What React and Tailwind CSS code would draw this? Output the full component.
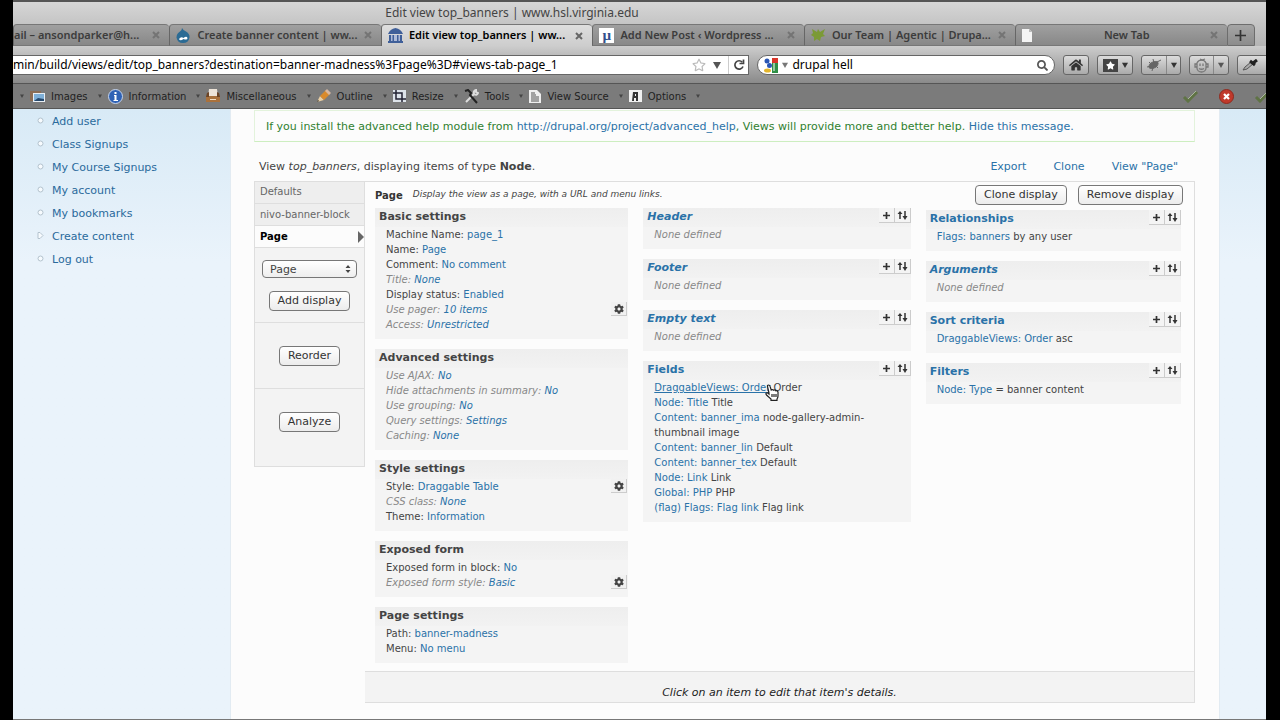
import { FaCog, FaHome, FaSearch, FaRegStar, FaStar } from "react-icons/fa";

const menuLinks = ["Add user", "Class Signups", "My Course Signups", "My account", "My bookmarks", "Create content", "Log out"];

const basicRows = [
    { label: "Machine Name:", link: "page_1" },
    { label: "Name:", link: "Page" },
    { label: "Comment:", link: "No comment" },
    { label: "Title:", link: "None", dim: true },
    { label: "Display status:", link: "Enabled" },
    { label: "Use pager:", link: "10 items", dim: true, gear: true },
    { label: "Access:", link: "Unrestricted", dim: true },
];

const advancedRows = [
    { label: "Use AJAX:", link: "No", dim: true },
    { label: "Hide attachments in summary:", link: "No", dim: true },
    { label: "Use grouping:", link: "No", dim: true },
    { label: "Query settings:", link: "Settings", dim: true },
    { label: "Caching:", link: "None", dim: true },
];

const styleRows = [
    { label: "Style:", link: "Draggable Table", gear: true },
    { label: "CSS class:", link: "None", dim: true },
    { label: "Theme:", link: "Information" },
];

const exposedRows = [
    { label: "Exposed form in block:", link: "No" },
    { label: "Exposed form style:", link: "Basic", dim: true, gear: true },
];

const pageRows = [
    { label: "Path:", link: "banner-madness" },
    { label: "Menu:", link: "No menu" },
];

const fieldRows = [
    { link: "DraggableViews: Order", text: "Order", hover: true },
    { link: "Node: Title", text: "Title" },
    { link: "Content: banner_ima", text: "node-gallery-admin-thumbnail image" },
    { link: "Content: banner_lin", text: "Default" },
    { link: "Content: banner_tex", text: "Default" },
    { link: "Node: Link", text: "Link" },
    { link: "Global: PHP", text: "PHP" },
    { link: "(flag) Flags: Flag link", text: "Flag link" },
];

export default function App() {
    return (
        <div className="min-h-screen bg-black pl-[13px] pr-[14px] flex flex-col font-['DejaVu_Sans',sans-serif]">
            <BrowserChrome />

            <div className="flex-1 flex bg-[#eaf3fb] border-b border-[#777] overflow-hidden">
                <nav className="w-[218px] shrink-0 pt-[2px] pl-[24px] bg-linear-to-b from-[#d8eaf6] to-[#eaf3fb] to-25% border-r border-[#e2ebf2]">
                    <ul>
                        {menuLinks.map((item) => (
                            <li key={item} className="h-[23px] flex items-center gap-2">
                                <MenuBullet open={item === "Create content"} />
                                <a href="#" className="text-[11px] text-[#2a6a9c]">{item}</a>
                            </li>
                        ))}
                    </ul>
                </nav>

                <main className="flex-1 min-w-0 bg-[#fcfcfc] pl-[23px] pr-6 pb-4">
                    <div className="mt-px h-8 border border-[#e3f3dc] border-b-[#cdeec0] pl-[11px] pt-[2px] flex items-center text-[11px] text-[#2f7f2f] whitespace-pre">
                        If you install the advanced help module from <a href="#" className="text-[#2a72a8]">http://drupal.org/project/advanced_help</a>, Views will provide more and better help. <a href="#" className="text-[#2a72a8]">Hide this message.</a>
                    </div>

                    <div className="mt-4 h-[23px] pl-[5px] pr-[17px] flex items-start justify-between text-[11px] leading-[18px] text-[#444]">
                        <p>View <em>top_banners</em>, displaying items of type <b>Node</b>.</p>
                        <div className="flex gap-[27px] text-[#2a72a8]">
                            <a href="#">Export</a>
                            <a href="#">Clone</a>
                            <a href="#">View "Page"</a>
                        </div>
                    </div>

                    <div className="flex items-start">
                        <DisplayTabs />
                        <div className="flex-1 min-w-0 border border-[#dedede] border-l-0">
                            <div className="h-[26px] pl-[10px] pr-[11px] flex items-center justify-between text-[#444]">
                                <p className="flex items-center gap-[10px]">
                                    <b className="text-[10px] text-[#333]">Page</b>
                                    <i className="text-[9px]">Display the view as a page, with a URL and menu links.</i>
                                </p>
                                <div className="flex gap-[11px]">
                                    <MacButton>Clone display</MacButton>
                                    <MacButton>Remove display</MacButton>
                                </div>
                            </div>

                            <div className="grid grid-cols-[253fr_267fr_255fr] gap-[15px] items-start pl-[10px] pr-[13px] pb-[8px]">
                                <div className="flex flex-col gap-[10px]">
                                    <Panel title="Basic settings" rows={basicRows} />
                                    <Panel title="Advanced settings" rows={advancedRows} />
                                    <Panel title="Style settings" rows={styleRows} />
                                    <Panel title="Exposed form" rows={exposedRows} />
                                    <Panel title="Page settings" rows={pageRows} />
                                </div>
                                <div className="flex flex-col gap-[10px]">
                                    <Panel title="Header" actions empty />
                                    <Panel title="Footer" actions empty />
                                    <Panel title="Empty text" actions empty />
                                    <Panel title="Fields" actions rows={fieldRows} />
                                </div>
                                <div className="flex flex-col gap-[10px] pt-[2px]">
                                    <Panel title="Relationships" actions rows={[{ link: "Flags: banners", text: "by any user" }]} />
                                    <Panel title="Arguments" actions empty />
                                    <Panel title="Sort criteria" actions rows={[{ link: "DraggableViews: Order", text: "asc" }]} />
                                    <Panel title="Filters" actions rows={[{ link: "Node: Type", text: "= banner content" }]} />
                                </div>
                            </div>

                            <div className="h-[31px] border-t border-[#dedede] bg-[#f3f3f3] pt-3 text-center text-[11px] leading-[18px] italic text-[#222]">
                                Click on an item to edit that item's details.
                            </div>
                        </div>
                    </div>
                </main>

                <div className="w-[47px] shrink-0 bg-linear-to-b from-[#d8eaf6] to-[#eaf3fb] to-25% border-l border-[#e2ebf2]"></div>
            </div>
        </div>
    );
}

function BrowserChrome() {
    return (
        <header className="bg-[#7b7b7b] border-t-2 border-[#555] text-[#333] overflow-hidden">
            <div className="bg-linear-to-b from-[#d6d6d6] to-[#b4b4b4]">
                <h1 className="h-[22px] pr-[255px] text-center text-[12px] leading-[22px] text-[#444] font-['Noto_Sans',sans-serif]">
                    Edit view top_banners | www.hsl.virginia.edu
                </h1>
                <div className="h-[22px] flex pr-[11px] text-[11px] font-semibold">
                    <Tab grow="flex-[154]" title="ail – ansondparker@h..." />
                    <Tab grow="flex-[212]" title="Create banner content | ww..." icon={<DrupalIcon />} />
                    <Tab grow="flex-[212]" title="Edit view top_banners | ww..." icon={<RotundaIcon />} active />
                    <Tab grow="flex-[212]" title="Add New Post ‹ Wordpress ..." icon={<MuIcon />} />
                    <Tab grow="flex-[212]" title="Our Team | Agentic | Drupa..." icon={<LeafIcon />} />
                    <Tab grow="flex-[212]" title="New Tab" icon={<BlankPageIcon />} center />
                    <button aria-label="Open a new tab" className="w-7 flex items-center justify-center bg-linear-to-b from-[#a5a5a5] to-[#8c8c8c] border border-[#6d6d6d] rounded-t-[4px]">
                        <svg width="11" height="11" viewBox="0 0 11 11" stroke="#333" strokeWidth="1.700"><path d="M5.500 0v11M0 5.500h11" /></svg>
                    </button>
                </div>
            </div>

            <div className="h-[38px] flex items-start pt-[9px] border-b border-[#555] bg-linear-to-b from-[#cdcdcd] to-[#8a8a8a]">
                <div className="flex-[739] min-w-0 h-5 flex items-center bg-white border border-l-0 border-[#666]">
                    <input aria-label="Address" className="flex-1 min-w-0 bg-transparent outline-none text-[12px] text-black font-['Noto_Sans',sans-serif]" defaultValue="min/build/views/edit/top_banners?destination=banner-madness%3Fpage%3D#views-tab-page_1" />
                    <button aria-label="Bookmark"><FaRegStar className="text-[14px] text-[#bbb]" /></button>
                    <button aria-label="History" className="w-[22px] flex justify-center"><Caret size={8} color="#555" /></button>
                    <button aria-label="Reload" className="w-5 h-full border-l border-[#ccc] flex items-center justify-center">
                        <svg width="12" height="12" viewBox="0 0 12 12" fill="none" stroke="#444" strokeWidth="1.700"><path d="M9.300 3.200A4.200 4.200 0 1 0 10 7.500" /><path d="M10.500 0.500v4h-4" /></svg>
                    </button>
                </div>
                <div className="flex-[286] min-w-0 ml-2 h-5 flex items-center gap-1 pl-[5px] pr-[6px] bg-white border border-[#666] rounded-full">
                    <GoogleIcon />
                    <Caret size={6} color="#777" />
                    <input aria-label="Search" className="flex-1 min-w-0 bg-transparent outline-none text-[12px] text-black font-['Noto_Sans',sans-serif]" defaultValue="drupal hell" />
                    <FaSearch className="text-[11px] text-[#555]" />
                </div>
                <div className="flex gap-2 ml-2 w-[203px] shrink-0 overflow-hidden">
                    <NavButton label="Home" width="w-[26px]"><FaHome className="text-[14px] text-[#333]" /></NavButton>
                    <NavButton label="Bookmarks" width="w-[36px]">
                        <span className="w-[15px] h-[13px] bg-[#444] flex items-center justify-center"><FaStar className="text-[9px] text-white" /></span>
                        <Caret size={6} color="#333" />
                    </NavButton>
                    <NavButton label="Firebug" width="w-[40px]">
                        <svg width="16" height="14" viewBox="0 0 16 14" fill="#666" stroke="#666"><ellipse cx="7.500" cy="7" rx="5" ry="3" transform="rotate(-30 7.500 7)" /><path d="M3 4l2 2M7 1l1 4M1 9l4-1M6 13l1-4M12 10l-2-2M11 4l4-2" strokeWidth="1" /></svg>
                        <span className="h-full border-l border-[#888] pl-1 flex items-center"><Caret size={6} color="#333" /></span>
                    </NavButton>
                    <NavButton label="Greasemonkey" width="w-[40px]">
                        <svg width="15" height="15" viewBox="0 0 15 15" fill="none" stroke="#777" strokeWidth="1.300"><path d="M3 5a5 5 0 0 1 9 0v5a4.500 4 0 0 1-9 0z" /><path d="M3 6H1v3h2M12 6h2v3h-2M6 5.500v2.500M9 5.500v2.500M5 10.500q2.500 1.500 5 0M6 1l2 1 3-1" /></svg>
                        <span className="h-full border-l border-[#888] pl-1 flex items-center"><Caret size={6} color="#555" /></span>
                    </NavButton>
                    <NavButton label="Pick color" width="w-[36px]">
                        <svg width="16" height="12" viewBox="0 0 16 12"><path d="M1 11l2-3 6-5 2 2-6 5z" fill="#aaa" stroke="#555" /><path d="M8 2l5 4M11 4l4-3" stroke="#222" strokeWidth="3" /></svg>
                        <span className="w-[6px]"></span>
                    </NavButton>
                </div>
            </div>

            <div className="h-[25px] pl-[7px] flex items-center justify-between border-b border-[#555] text-[10px] text-[#1f1f1f]">
                <div className="flex items-center gap-[6px]">
                    <Caret size={4} color="#444" />
                    <ToolItem label="Images" icon={<ImagesIcon />} />
                    <ToolItem label="Information" icon={<InfoIcon />} />
                    <ToolItem label="Miscellaneous" icon={<MiscIcon />} />
                    <ToolItem label="Outline" icon={<PencilIcon />} />
                    <ToolItem label="Resize" icon={<ResizeIcon />} />
                    <ToolItem label="Tools" icon={<ToolsIcon />} />
                    <ToolItem label="View Source" icon={<SourceIcon />} />
                    <ToolItem label="Options" icon={<OptionsIcon />} />
                </div>
                <div className="flex items-center gap-5">
                    <CheckIcon />
                    <svg width="15" height="15" viewBox="0 0 15 15"><circle cx="7.500" cy="7.500" r="7" fill="#c0392b" stroke="#8e2b20" /><path d="M5 5l5 5M10 5l-5 5" stroke="#fff" strokeWidth="2.200" /></svg>
                    <CheckIcon cut />
                </div>
            </div>
        </header>
    );
}

function Tab({ grow, title, icon, active, center }) {
    const look = active
        ? "bg-linear-to-b from-[#dedede] to-[#cdcdcd] text-black"
        : "bg-linear-to-b from-[#a0a0a0] to-[#888] text-[#3c3c3c] border-b border-b-[#777]";
    return (
        <div className={`${grow} ${look} min-w-0 flex items-center border-t border-l border-t-[#777] border-l-[#666] rounded-t-[4px] pr-[9px] font-['Noto_Sans',sans-serif]`}>
            {icon && <span className="w-[27px] pl-[6px] shrink-0">{icon}</span>}
            <span className={`flex-1 min-w-0 truncate ${center ? "text-center" : ""}`}>{title}</span>
            <button aria-label="Close tab" className="shrink-0">
                <svg width="8" height="8" viewBox="0 0 8 8" stroke={active ? "#666" : "#747474"} strokeWidth="2"><path d="M1 1l6 6M7 1l-6 6" /></svg>
            </button>
        </div>
    );
}

function NavButton({ label, width, children }) {
    return (
        <button aria-label={label} className={`${width} h-5 shrink-0 flex items-center justify-center gap-1 bg-linear-to-b from-[#dcdcdc] to-[#aaa] border border-[#666] rounded-[3px]`}>
            {children}
        </button>
    );
}

function ToolItem({ label, icon }) {
    return (
        <button className="flex items-center gap-[6px]">
            {icon}
            <span>{label}</span>
            <span className="pl-1"><Caret size={4} color="#444" /></span>
        </button>
    );
}

function Caret({ size, color }) {
    return (
        <svg width={size} height={size} viewBox="0 0 8 8" fill={color}><path d="M0 1h8L4 8z" /></svg>
    );
}

function DisplayTabs() {
    return (
        <div className="w-[111px] shrink-0 border border-[#dedede] bg-[#f3f3f3] text-[10px] text-[#666]">
            <a href="#" className="block h-[22px] pl-[5px] leading-[20px] bg-[#eee] border-b border-[#dedede]">Defaults</a>
            <a href="#" className="block h-[22px] pl-[5px] leading-[22px] bg-[#eee] border-b border-[#dedede]">nivo-banner-block</a>
            <a href="#" className="h-[22px] pl-[5px] flex items-center justify-between bg-[#fcfcfc] border-b border-[#dedede] font-bold text-black">
                Page
                <svg width="6" height="12" viewBox="0 0 6 12" fill="#666"><path d="M0 0l6 6-6 6z" /></svg>
            </a>
            <div className="h-[75px] pt-3 flex flex-col items-center gap-[13px] border-b border-[#dedede]">
                <div className="relative">
                    <select aria-label="Display type" className="appearance-none w-[95px] h-[18px] pl-[7px] rounded-[4px] border border-[#777] bg-linear-to-b from-white to-[#eee] text-[11px] leading-[15px] text-[#444]">
                        <option>Page</option>
                    </select>
                    <svg className="absolute right-[6px] top-[5px] pointer-events-none" width="6" height="8" viewBox="0 0 6 8" fill="#444"><path d="M3 0l2.500 3h-5zM3 8l2.500-3h-5z" /></svg>
                </div>
                <MacButton>Add display</MacButton>
            </div>
            <div className="h-[66px] flex items-center justify-center border-b border-[#dedede]"><MacButton>Reorder</MacButton></div>
            <div className="h-[77px] pt-[23px] flex items-start justify-center"><MacButton>Analyze</MacButton></div>
        </div>
    );
}

function MacButton({ children }) {
    return (
        <button className="h-5 px-2 rounded-[4px] border border-[#777] bg-linear-to-b from-white to-[#ececec] text-[11px] leading-[18px] text-[#333]">
            {children}
        </button>
    );
}

function Panel({ title, rows = [], actions, empty }) {
    return (
        <section className="bg-[#f4f4f4] pb-[7px] text-[10px] leading-[15px]">
            <div className="h-[19px] pl-1 flex items-start justify-between bg-linear-to-b from-[#eee] to-[#f2f2f2]">
                <h2 className={`text-[11px] leading-[18px] font-bold ${actions ? "text-[#2a72a8]" : "text-[#444]"} ${empty ? "italic" : ""}`}>
                    {actions ? <a href="#">{title}</a> : title}
                </h2>
                {actions && (
                    <div className="flex">
                        <MiniButton label="Add"><path d="M7.500 4v7M4 7.500h7" stroke="#333" strokeWidth="1.700" /></MiniButton>
                        <MiniButton label="Rearrange">
                            <path d="M5 11V5M10 3v6" stroke="#333" strokeWidth="1.500" />
                            <path d="M2.500 6L5 3l2.500 3zM7.500 8l2.500 4 2.500-4z" fill="#333" />
                        </MiniButton>
                    </div>
                )}
            </div>
            <div className="pl-[11px] pr-px">
                {empty && <p className="italic text-[#888]">None defined</p>}
                {rows.map((row) => <Row key={(row.label || "") + row.link} {...row} />)}
            </div>
        </section>
    );
}

function Row({ label, link, text, dim, gear, hover }) {
    return (
        <div className={`flex justify-between ${gear ? "h-[15px]" : ""} ${dim ? "italic text-[#888]" : "text-[#444]"}`}>
            <p className="pr-8">
                {label}{label && " "}
                <a href="#" className={`relative text-[#2a72a8] ${hover ? "underline" : ""}`}>{link}{hover && <HandCursor />}</a>
                {text && " "}{text}
            </p>
            {gear && (
                <button aria-label="Settings" className="w-4 h-[14px] shrink-0 flex items-center justify-center border-r border-b border-[#ccc] bg-[#f1f1f1]">
                    <FaCog className="text-[10px] text-[#444]" />
                </button>
            )}
        </div>
    );
}

function MiniButton({ label, children }) {
    return (
        <button aria-label={label} className="w-4 h-[15px] border-r border-b border-[#ccc] bg-[#f4f4f4]">
            <svg width="15" height="14" viewBox="0 0 15 14" fill="none">{children}</svg>
        </button>
    );
}

function HandCursor() {
    return (
        <svg className="absolute -right-[9px] top-[2px] z-10" width="14" height="17" viewBox="0 0 14 17" fill="#fff" stroke="#222" strokeWidth="1.200">
            <path d="M4 9L2.500 2.500Q2.300 1 3.500 1T5 2.200L6.200 6Q7.500 5 8.500 6.200 10 5.300 10.800 6.800 12.500 6.300 13 8v4q0 1.500-1 3v1.300H6V15L1.500 11Q.3 9.500 1.500 9T4 10z" />
            <path d="M7 10v3M9 10v3M11 10v3" />
        </svg>
    );
}

function MenuBullet({ open }) {
    return (
        <svg className="mb-1" width="7" height="7" viewBox="0 0 7 7" fill="#f7fbfe" stroke="#b4c3ce">
            {open ? <path d="M1 .5h2l3 3-3 3H1z" /> : <circle cx="3.500" cy="3.500" r="2.500" />}
        </svg>
    );
}

/* Tab icons */
function DrupalIcon() {
    return (
        <svg width="14" height="15" viewBox="0 0 14 15"><path d="M6 0q1 2 4 3.500 4 2.500 3.500 6Q12.500 15 7 15T.5 9.500Q.5 5.500 4 3.500 6 2.500 6 0z" fill="#2b6b94" /><path d="M3 11q2-3 4.500-1 3-2.500 4 0 0 2.500-4 1Q4 13.500 3 11z" fill="#fff" /></svg>
    );
}

function RotundaIcon() {
    return (
        <svg width="15" height="15" viewBox="0 0 15 15" fill="#3f5f99"><path d="M0 6Q2 1 7.500 0 13 1 15 6zM0 13h15v2H0z" /><path d="M1 7h13v6H1z" fill="#aebbd8" /><path d="M1 7h2v6H1zM4.500 7h1.500v6H4.500zM9 7h1.500v6H9zM12 7h2v6h-2z" /></svg>
    );
}

function MuIcon() {
    return (
        <span className="flex w-[15px] h-[15px] items-center justify-center bg-white text-[15px] leading-[13px] text-[#33508c] font-['Liberation_Serif',serif]">µ</span>
    );
}

function LeafIcon() {
    return (
        <svg width="15" height="14" viewBox="0 0 15 14" fill="#7b9a35"><path d="M1 1l5 3 1-3 2 3 5-3-2 5 2 2-4 1-1 4-3-2-3 2V9L0 7l2-2z" /></svg>
    );
}

function BlankPageIcon() {
    return (
        <svg width="10" height="13" viewBox="0 0 10 13"><path d="M0 0h7l3 3v10H0z" fill="#f4f4f4" /><path d="M7 0v3h3z" fill="#bbb" /></svg>
    );
}

function GoogleIcon() {
    return (
        <svg width="15" height="15" viewBox="0 0 15 15"><path d="M9 0h6v5H9z" fill="#d8352a" /><path d="M9 5h6v10H9z" fill="#2f8f46" /><path d="M0 9h9v6H0z" fill="#fff" /><circle cx="4" cy="3" r="2.500" fill="#2a56b5" /><circle cx="6.500" cy="7.500" r="2.500" fill="#2a56b5" /><ellipse cx="4.500" cy="12.500" rx="3.500" ry="2" fill="#e3b52c" /><path d="M11 5v8" stroke="#fff" /></svg>
    );
}

/* Web developer toolbar icons */
function ImagesIcon() {
    return (
        <svg width="15" height="13" viewBox="0 0 15 13"><path d="M0 1h11v10H0z" fill="#8b6d55" /><path d="M3 3h12v9H3z" fill="#e8eef4" /><path d="M4 4h10v7H4z" fill="#7fb0d8" /><path d="M4 11l4-3 6 1v2z" fill="#27496d" /></svg>
    );
}

function InfoIcon() {
    return (
        <svg width="15" height="15" viewBox="0 0 15 15"><circle cx="7.500" cy="7.500" r="7" fill="#2f62b5" stroke="#c7d4ea" /><path d="M6 6h2.500v5H10v1H5.500v-1h1V7H6zM6.500 3h2v2h-2z" fill="#fff" /></svg>
    );
}

function MiscIcon() {
    return (
        <svg width="14" height="14" viewBox="0 0 14 14"><path d="M3 0h8l1 8H2z" fill="#eee4d8" /><path d="M0 7h14v6H0z" fill="#a9713c" /><path d="M1 4l2-1v5H0zM13 4l-2-1v5h3z" fill="#6b4426" /><path d="M4 10h6v1H4z" fill="#f2dcc0" /></svg>
    );
}

function PencilIcon() {
    return (
        <svg width="14" height="14" viewBox="0 0 14 14"><path d="M0 13l3-6 4 4z" fill="#e9cfa5" /><path d="M3 7l6-6 4 4-6 6z" fill="#d98a2b" /><path d="M8 2l2-2 4 4-2 2z" fill="#d8b7a0" /><path d="M0 13l1-2 1 1z" fill="#222" /></svg>
    );
}

function ResizeIcon() {
    return (
        <svg width="13" height="12" viewBox="0 0 13 12" fill="none"><path d="M0 0h13v12H0z" fill="#dde3ea" /><path d="M3 0v9h10M0 3h9v9" stroke="#223" strokeWidth="1.500" /></svg>
    );
}

function ToolsIcon() {
    return (
        <svg width="15" height="15" viewBox="0 0 15 15" fill="none"><path d="M2 13L10 5M10 5q-1-3 2-4l0 2 2 1q-1 3-4 1z" stroke="#ddd" strokeWidth="2" /><path d="M1 2l3-1 3 3-1 2 7 8" stroke="#222" strokeWidth="2" /></svg>
    );
}

function SourceIcon() {
    return (
        <svg width="12" height="13" viewBox="0 0 12 13"><path d="M0 0h8l4 4v9H0z" fill="#eee" /><path d="M2 3h4M2 5h5M2 7h8M2 9h8M2 11h8" stroke="#555" /></svg>
    );
}

function OptionsIcon() {
    return (
        <svg width="13" height="12" viewBox="0 0 13 12"><path d="M0 0h13v12H0z" fill="#f0f0f0" /><path d="M4 2h5v9H7V8H5v3H3z" fill="#333" /><path d="M6 4h1v2H6z" fill="#f0f0f0" /></svg>
    );
}

function CheckIcon({ cut }) {
    return (
        <svg width={cut ? 12 : 17} height="13" viewBox={cut ? "0 0 12 13" : "0 0 17 13"} fill="none"><path d="M2 7l4 4 9-9" stroke="#5f7345" strokeWidth="3" /><path d="M6 9l8-8" stroke="#a9b59c" strokeWidth="1" /></svg>
    );
}
